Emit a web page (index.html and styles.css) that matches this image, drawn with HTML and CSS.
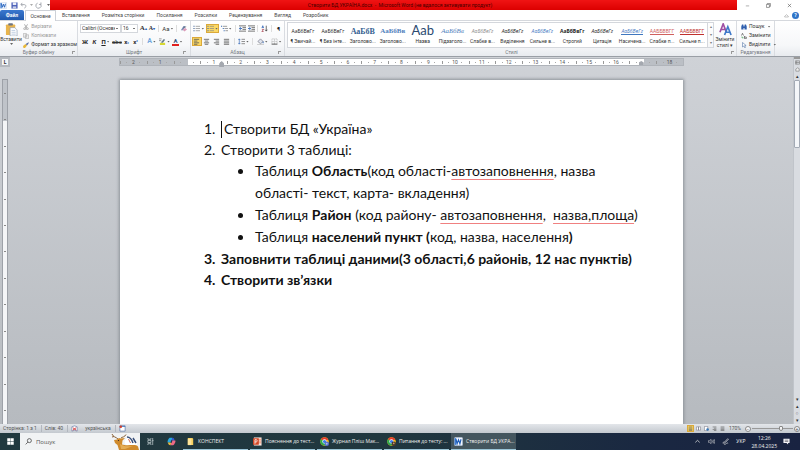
FILE: index.html
```html
<!DOCTYPE html>
<html lang="uk">
<head>
<meta charset="utf-8">
<title>Створити БД УКРАЇНА.docx</title>
<link rel="stylesheet" href="styles.css">
</head>
<body>
<svg class="defs" aria-hidden="true">
  <symbol id="word" viewBox="0 0 16 16"><rect x="4" y="1" width="11" height="14" rx="1" fill="#41a5ee"/><path d="M4 8h11v6a1 1 0 0 1-1 1H5a1 1 0 0 1-1-1z" fill="#185abd"/><rect x="0" y="3" width="10" height="10" rx="1" fill="#1a56b0"/><path d="M2 5.500l1.500 5L5 6l1.500 4.500L8 5.500" fill="none" stroke="#fff" stroke-width="1.200"/></symbol>
  <symbol id="wordlight" viewBox="0 0 16 16"><rect x="1" y="1" width="14" height="14" rx="1" fill="#f3f7fd" stroke="#b9cbe6"/><path d="M1 2h3v12H1z" fill="#3b7bd0"/><path d="M3.500 4l2 8L8 5l2.500 7 2-8" fill="none" stroke="#1d5cb8" stroke-width="2"/></symbol>
  <symbol id="chrome" viewBox="0 0 20 20"><circle cx="10" cy="10" r="9.500" fill="#fbc116"/><path d="M10 10L1.800 5.200A9.500 9.500 0 0 1 18.300 5.500z" fill="#e33b2e"/><path d="M10 10L1.800 5.200A9.500 9.500 0 0 0 9.500 19.500L14 12z" fill="#2da94f"/><circle cx="10" cy="10" r="4.800" fill="#fff"/><circle cx="10" cy="10" r="3.600" fill="#3b7de9"/></symbol>
  <symbol id="left" viewBox="0 0 8 8"><path d="M1 1.500h6M1 3.500h4M1 5.500h6M1 7.200h4" stroke="#555" stroke-width=".9"/></symbol>
  <symbol id="center" viewBox="0 0 8 8"><path d="M1 1.500h6M2 3.500h4M1 5.500h6M2 7.200h4" stroke="#555" stroke-width=".9"/></symbol>
  <symbol id="right" viewBox="0 0 8 8"><path d="M1 1.500h6M3 3.500h4M1 5.500h6M3 7.200h4" stroke="#555" stroke-width=".9"/></symbol>
  <symbol id="full" viewBox="0 0 8 8"><path d="M1 1.500h6M1 3.500h6M1 5.500h6M1 7.200h6" stroke="#555" stroke-width=".9"/></symbol>
  <symbol id="list" viewBox="0 0 8 8"><path d="M3 1.500h5M3 4h5M3 6.500h5" stroke="#888" stroke-width=".8"/><path d="M.5 1.500h1.300M.5 4h1.300M.5 6.500h1.300" stroke="#46689c" stroke-width="1.200"/></symbol>
  <symbol id="multi" viewBox="0 0 8 8"><path d="M2 1.500h5M4 4h4M5 6.500h3" stroke="#777" stroke-width=".8"/><path d="M0 1.500h1.200M2 4h1.200M3 6.500h1.200" stroke="#3569b5" stroke-width="1.200"/></symbol>
  <symbol id="outdent" viewBox="0 0 8 8"><path d="M0 1h8M4 3h4M4 5h4M0 7h8" stroke="#555" stroke-width=".9"/><path d="M3.500 4H1M2 2.500L.3 4 2 5.500" stroke="#2d62b5" fill="none"/></symbol>
  <symbol id="indent" viewBox="0 0 8 8"><path d="M0 1h8M4 3h4M4 5h4M0 7h8" stroke="#555" stroke-width=".9"/><path d="M0 4h2.500M1.500 2.500L3.200 4 1.500 5.500" stroke="#2d62b5" fill="none"/></symbol>
</svg>

<header class="titlebar">
  <div class="quick">
    <svg class="i7"><use href="#wordlight"/></svg>
    <i class="vline"></i>
    <button aria-label="Зберегти"><svg class="i7" viewBox="0 0 8 8"><path d="M.5.5h7v7h-7z" fill="#4a5fb8"/><path d="M2 .5h4v3H2z" fill="#e8ecf8"/><path d="M2 5h4v2.500H2z" fill="#c9d0e8"/></svg></button>
    <button aria-label="Скасувати"><svg class="i7" viewBox="0 0 8 8"><path d="M2.500 1L1 3l2 1.500M1.200 3H5c2.500 0 2 3.500 0 4" fill="none" stroke="#9ba0a8"/></svg></button>
    <span class="caret-down pale"></span>
    <button aria-label="Повторити"><svg class="i7" viewBox="0 0 8 8"><path d="M6.500 2.500A3 3 0 1 1 3 1.300M6.800.5v2.300H4.500" fill="none" stroke="#9ba0a8"/></svg></button>
    <i class="vline"></i>
    <span class="caret-down"></span>
  </div>
  <h1 class="caption">Створити БД УКРАЇНА.docx&nbsp; -&nbsp; Microsoft Word (не вдалося активувати продукт)</h1>
  <div class="winbtns">
    <button aria-label="Згорнути"><svg class="i5" viewBox="0 0 6 6"><path d="M1 3.500h4" stroke="#777" stroke-width=".7"/></svg></button>
    <button aria-label="Відновити"><svg class="i5" viewBox="0 0 6 6"><path d="M.5 1.700h3.600v3.600H.5zM1.700 1.500V.5h3.600v3.600H4.300" fill="none" stroke="#555" stroke-width=".7"/></svg></button>
    <button aria-label="Закрити"><svg class="i5" viewBox="0 0 6 6"><path d="M1 1l4 4M5 1L1 5" stroke="#555" stroke-width=".7"/></svg></button>
  </div>
</header>

<nav class="tabs">
  <button class="file">Файл</button>
  <button class="current">Основне</button>
  <button>Вставлення</button>
  <button>Розмітка сторінки</button>
  <button>Посилання</button>
  <button>Розсилки</button>
  <button>Рецензування</button>
  <button>Вигляд</button>
  <button>Розробник</button>
  <span class="help">
    <svg class="i5" viewBox="0 0 6 6"><path d="M.8 4L3 2l2.200 2v.8H.8z" fill="none" stroke="#888" stroke-width=".6"/></svg>
    <button class="helpbtn" aria-label="Довідка">?</button>
  </span>
</nav>

<section class="ribbon">
  <div class="group clipboard">
    <div class="tools split">
      <button class="big"><svg class="i14" viewBox="0 0 14 14"><rect x="1" y="1.500" width="10" height="11.500" rx="1" fill="#e9b44c"/><rect x="3.500" y=".3" width="5" height="2.500" rx=".8" fill="#6f7480"/><path d="M5.500 5h5l2.500 2.500V14H5.500z" fill="#fff" stroke="#8d9db8" stroke-width=".7"/><path d="M7 8h4M7 10h4.500M7 12h4.500" stroke="#8fa8cf" stroke-width=".6"/></svg><span>Вставити</span><i class="caret-down"></i></button>
      <div class="stack">
        <button class="off"><svg class="i6" viewBox="0 0 6 6"><path d="M1.500.3l2 3.500M4.500.3l-2 3.500" stroke="#999" stroke-width=".8"/><circle cx="1.700" cy="4.700" r="1" fill="none" stroke="#999" stroke-width=".7"/><circle cx="4.300" cy="4.700" r="1" fill="none" stroke="#999" stroke-width=".7"/></svg>Вирізати</button>
        <button class="off"><svg class="i6" viewBox="0 0 6 6"><path d="M.4.4h3v3.800h-3zM2.400 1.800h3.200v3.800H2.400z" fill="#eee" stroke="#aaa" stroke-width=".6"/></svg>Копіювати</button>
        <button><svg class="i6" viewBox="0 0 6 6"><path d="M0 4l2.500-2 1.500 1.500L2 6H.5z" fill="#e8b83a"/><path d="M2.700 2L5.500.2 5.800 1 4 3.500z" fill="#5a6ea5"/></svg>Формат за зразком</button>
      </div>
    </div>
    <footer>Буфер обміну<i class="launch"></i></footer>
  </div>

  <div class="group font">
    <div class="tools">
      <div class="row">
        <select class="fontname" aria-label="Шрифт"><option>Calibri (Основний текст)</option></select>
        <select class="fontsize" aria-label="Розмір"><option>16</option></select>
        <button class="w9 serif">A<sup class="blue">▴</sup></button>
        <button class="w9 serif small">A<sup class="blue">▾</sup></button>
        <i class="sep"></i>
        <button class="w13">Aa<i class="caret-down"></i></button>
        <i class="sep"></i>
        <button class="w9" aria-label="Очистити формат"><svg class="i7" viewBox="0 0 8 8"><path d="M1 6l3-5h2L4 6z" fill="#7a8db5"/><path d="M3 5l3-1.500L8 5 5 7.500z" fill="#dc9bb8"/><path d="M4 3l3-1" stroke="#456" stroke-width=".8"/></svg></button>
      </div>
      <div class="row">
        <button class="w10 heavy">Ж</button>
        <button class="w9 heavy ital">К</button>
        <button class="w13 heavy"><u>П</u><i class="caret-down"></i></button>
        <button class="w10"><s>abc</s></button>
        <button class="w9 heavy">x<sub class="blue">₂</sub></button>
        <button class="w9 heavy">x<sup class="blue">²</sup></button>
        <i class="sep"></i>
        <button class="w13 effect">A<i class="caret-down"></i></button>
        <button class="w13" aria-label="Колір виділення"><svg class="i7" viewBox="0 0 8 8"><path d="M1 5.500h6V8H1z" fill="#d7d832"/><path d="M2 5l3.500-4L7 2 4.500 5.500z" fill="#687d8d"/><path d="M0 1h3M0 3h2.500" stroke="#777" stroke-width=".8"/></svg><i class="caret-down"></i></button>
        <button class="w13"><span class="fontcolor">A</span><i class="caret-down"></i></button>
      </div>
    </div>
    <footer>Шрифт<i class="launch"></i></footer>
  </div>

  <div class="group para">
    <div class="tools">
      <div class="row">
        <button class="w13" aria-label="Маркери"><svg class="i7"><use href="#list"/></svg><i class="caret-down"></i></button>
        <button class="w13 on" aria-label="Нумерація"><svg class="i7"><use href="#list"/></svg><i class="caret-down"></i></button>
        <button class="w13" aria-label="Багаторівневий список"><svg class="i7"><use href="#multi"/></svg><i class="caret-down"></i></button>
        <i class="sep"></i>
        <button class="w9" aria-label="Зменшити відступ"><svg class="i7"><use href="#outdent"/></svg></button>
        <button class="w9" aria-label="Збільшити відступ"><svg class="i7"><use href="#indent"/></svg></button>
        <i class="sep"></i>
        <button class="w9" aria-label="Сортування"><svg class="i7" viewBox="0 0 8 8"><path d="M1 3.500L2 .8l1 2.700M1.200 2.600h1.600" fill="none" stroke="#2d62b5" stroke-width=".8"/><path d="M1 5h2L1 7.500h2" fill="none" stroke="#a03040" stroke-width=".8"/><path d="M6 .8v6M4.800 5.400L6 7l1.200-1.600" fill="none" stroke="#333" stroke-width=".8"/></svg></button>
        <i class="sep"></i>
        <button class="w9 heavy">¶</button>
      </div>
      <div class="row">
        <button class="w10 on" aria-label="Ліворуч"><svg class="i7"><use href="#left"/></svg></button>
        <button class="w10" aria-label="По центру"><svg class="i7"><use href="#center"/></svg></button>
        <button class="w10" aria-label="Праворуч"><svg class="i7"><use href="#right"/></svg></button>
        <button class="w10" aria-label="По ширині"><svg class="i7"><use href="#full"/></svg></button>
        <i class="sep"></i>
        <button class="w13" aria-label="Інтервал"><svg class="i7" viewBox="0 0 8 8"><path d="M4 1.500h4M4 4h4M4 6.500h4" stroke="#666" stroke-width=".8"/><path d="M1.500 1v6M.3 2.400L1.500 1l1.200 1.400M.3 5.600L1.500 7l1.200-1.400" fill="none" stroke="#2d62b5" stroke-width=".7"/></svg><i class="caret-down"></i></button>
        <i class="sep"></i>
        <button class="w13" aria-label="Заливка"><svg class="i7" viewBox="0 0 8 8"><path d="M1 4l3-3 3 3-3 2.500z" fill="#dfe4ee" stroke="#667" stroke-width=".7"/><path d="M7 4v2" stroke="#2d62b5"/><path d="M0 7.500h8" stroke="#bbb" stroke-width=".8"/></svg><i class="caret-down"></i></button>
        <button class="w13" aria-label="Межі"><svg class="i7" viewBox="0 0 8 8"><path d="M1 1h6v6H1zM4 1v6M1 4h6" fill="none" stroke="#999" stroke-width=".6" stroke-dasharray="1 .6"/><path d="M.7 7h6.600" stroke="#444" stroke-width=".9"/></svg><i class="caret-down"></i></button>
      </div>
    </div>
    <footer>Абзац<i class="launch"></i></footer>
  </div>

  <div class="group styles">
    <div class="tools split">
      <div class="gallery">
        <button><b>АаБбВвГг</b><span>¶ Звичай...</span></button>
        <button><b>АаБбВвГг</b><span>¶ Без інте...</span></button>
        <button><b class="h1">АаБбВ</b><span>Заголово...</span></button>
        <button><b class="h2">АаБбВв</b><span>Заголово...</span></button>
        <button><b class="title">Ааb</b><span>Назва</span></button>
        <button><b class="subtitle">АаБбВв</b><span>Підзаголо...</span></button>
        <button><b class="ital faded">АаБбВвГг</b><span>Слабке в...</span></button>
        <button><b class="ital">АаБбВвГг</b><span>Виділення</span></button>
        <button><b class="ital azure">АаБбВвГг</b><span>Сильне в...</span></button>
        <button><b class="heavy">АаБбВвГг</b><span>Строгий</span></button>
        <button><b class="ital">АаБбВвГг</b><span>Цитація</span></button>
        <button><b class="ital azure lined">АаБбВвГг</b><span>Насичена...</span></button>
        <button><b class="rose lined">ААББВВГГ</b><span>Слабке п...</span></button>
        <button><b class="crimson lined">ААББВВГГ</b><span>Сильне п...</span></button>
      </div>
      <div class="scroller"><button aria-label="Вгору">▴</button><button aria-label="Вниз">▾</button><button aria-label="Більше">▾</button></div>
      <button class="big change"><svg class="i14" viewBox="0 0 14 14"><path d="M1 10L4.500 1 8 10M2.200 7h4.600" fill="none" stroke="#9f4fa3" stroke-width="1.800"/><path d="M6 13L9.500 4 13 13M7.200 10h4.600" fill="none" stroke="#3f79c9" stroke-width="1.800"/></svg><span>Змінити</span><span>стилі ▾</span></button>
    </div>
    <footer>Стилі<i class="launch"></i></footer>
  </div>

  <div class="group edit">
    <div class="tools stack">
      <button><svg class="i6" viewBox="0 0 6 6"><path d="M.3 5.500v-3L1 .5h1.300l.4 2h.6l.4-2H5l.7 2v3H3.500V4h-1v1.500z" fill="#2f5fae"/></svg>Пошук<i class="caret-down"></i></button>
      <button><svg class="i6" viewBox="0 0 6 6"><path d="M.5 2.500L1.500.3l1 2.200M3.500 3v2.700h1.800V4H3.500" fill="none" stroke="#555" stroke-width=".7"/><path d="M1 3.500v1.300h1.500" fill="none" stroke="#3a9a4c" stroke-width=".7"/></svg>Замінити</button>
      <button><svg class="i6" viewBox="0 0 6 6"><path d="M1.500.5v4.500l1.200-1 1 1.800.8-.4-.9-1.700 1.500-.2z" fill="#fff" stroke="#5577a8" stroke-width=".6"/></svg>Виділити<i class="caret-down"></i></button>
    </div>
    <footer>Редагування</footer>
  </div>
</section>

<main class="workspace">
  <aside class="leftrail">
    <button class="tabstop" aria-label="Табуляція">L</button>
    <div class="vruler"><i></i><i></i><i></i><i></i><i></i><i></i><i></i><i></i><i></i><i></i><i></i><i></i><i></i></div>
  </aside>
  <div class="canvas">
    <div class="ruler">
      <span>2</span><span>1</span><span class="zero"></span><span class="hang">1</span><span>2</span><span>3</span><span>4</span><span>5</span><span>6</span><span>7</span><span>8</span><span>9</span><span>10</span><span>11</span><span>12</span><span>13</span><span>14</span><span>15</span><span>16</span><span class="hang end"></span><span>18</span>
    </div>
    <article class="page">
      <ol>
        <li><span class="num">1.</span><p><i class="cursor"></i>Створити БД «Україна»</p></li>
        <li><span class="num">2.</span><p>Створити 3 таблиці:</p></li>
      </ol>
      <ul>
        <li><i class="dot"></i><p>Таблиця <b>Область</b>(код області-<u>автозаповнення</u>, назва<br>області- текст, карта- вкладення)</p></li>
        <li><i class="dot"></i><p>Таблиця <b>Район</b> (код району- <u>автозаповнення</u>,&nbsp; <u>назва,площа</u>)</p></li>
        <li><i class="dot"></i><p>Таблиця <b>населений пункт (</b>код, назва, населення<b>)</b></p></li>
      </ul>
      <ol class="strong">
        <li><span class="num">3.</span><p>Заповнити таблиці даними(3 області,6 районів, 12 нас пунктів)</p></li>
        <li><span class="num">4.</span><p>Створити зв’язки</p></li>
      </ol>
    </article>
  </div>
  <aside class="scrollbar">
    <button class="tiny" aria-label="Розділити"></button>
    <button aria-label="Лінійка"><svg class="i5" viewBox="0 0 6 6"><path d="M.5 1h5v4h-5zM.5 3h5M2 1v4" fill="none" stroke="#777" stroke-width=".7"/></svg></button>
    <button aria-label="Рука"><svg class="i5" viewBox="0 0 6 6"><path d="M1 2.500V5h4V2L3 1z" fill="#eee" stroke="#777" stroke-width=".7"/></svg></button>
    <button>▴</button>
    <div class="thumb"></div>
    <span class="track"></span>
    <button>▾</button>
    <button>▴</button>
    <button>○</button>
    <button>▾</button>
  </aside>
</main>

<section class="status">
  <span>Сторінка: 1 з 1</span>
  <span>Слів: 40</span>
  <span class="bare"><svg class="i7" viewBox="0 0 8 8"><path d="M1 2l3-1 3 1v5L4 6 1 7z" fill="#fff" stroke="#5d77a8" stroke-width=".7"/><path d="M2 3l4 3M6 3L2 6" stroke="#d03030"/></svg></span>
  <span>українська</span>
  <span class="bare"><svg class="i7" viewBox="0 0 8 8"><path d="M1 1h6v6H1z" fill="#fff" stroke="#5d77a8" stroke-width=".8"/><path d="M1 1.500h6" stroke="#3569b5"/><circle cx="2" cy="2" r="1.500" fill="#d04030"/></svg></span>
  <div class="views">
    <button class="on" aria-label="Розмітка"><svg class="i5"><use href="#full"/></svg></button>
    <button aria-label="Читання"><svg class="i5" viewBox="0 0 6 6"><path d="M.5 1H3v4H.5zM3 1h2.500v4H3z" fill="#fff" stroke="#667" stroke-width=".6"/></svg></button>
    <button aria-label="Веб"><svg class="i5" viewBox="0 0 6 6"><path d="M.5.5h4v5h-4z" fill="#fff" stroke="#667" stroke-width=".6"/><circle cx="4.300" cy="4.300" r="1.500" fill="#3878b8"/></svg></button>
    <button aria-label="Структура"><svg class="i5"><use href="#right"/></svg></button>
    <button aria-label="Чернетка"><svg class="i5"><use href="#full"/></svg></button>
  </div>
  <span class="bare percent">170%</span>
  <div class="zoom"><button aria-label="Зменшити">−</button><input type="range" min="0" max="100" value="72" aria-label="Масштаб"><button aria-label="Збільшити">+</button></div>
</section>

<footer class="taskbar">
  <button class="start" aria-label="Пуск"><svg class="i7" viewBox="0 0 8 8"><path d="M.3.3h3.500v3.500H.3zM4.200.3h3.500v3.500H4.200zM.3 4.200h3.500v3.500H.3zM4.200 4.200h3.500v3.500H4.200z" fill="#fff"/></svg></button>
  <label class="search">
    <svg class="i7" viewBox="0 0 8 8"><circle cx="5" cy="3" r="2.300" fill="none" stroke="#333" stroke-width=".8"/><path d="M3.300 4.700L.8 7.300" stroke="#333" stroke-width=".8"/></svg>
    <input type="text" placeholder="Пошук" aria-label="Пошук">
    <svg class="deer" viewBox="0 0 30 16"><path d="M8 5C6 3 3 3 2 0M4 2.500L2 3M11 4c1-1 4-1 5-3.500" fill="none" stroke="#8a6238" stroke-width="1"/><path d="M15 10c-1-5 3-8 8-6 3 1 4 3 4 8h-9z" fill="#fff"/><path d="M17 3c3 0 5 3 6 6M23 4l3 5" fill="none" stroke="#394f78" stroke-width="1.500"/><path d="M18.500 5l2 4" stroke="#cc6d5a" stroke-width="1"/><path d="M4 6l3-.5 2-1.500 2 .5 4-.5-2.500 2.500-.5 4c5 2 14-1 16 2l1 3.500H9L7.500 11 5 9z" fill="#cf8a2c"/><path d="M10 10l2 1c3 2 8 1 11 1l-8 3h-4z" fill="#e5ad55"/><circle cx="8.500" cy="6.500" r=".6" fill="#322"/></svg>
  </label>
  <button class="pin" aria-label="Подання завдань"><svg class="i7" viewBox="0 0 8 8"><path d="M1 0v1.500h3.500V0M1 8V6.500h3.500V8M1 2.800h3.500v2.400H1zM6.500 0v8M6 3h1.500" fill="none" stroke="#dde6e8" stroke-width=".7"/></svg></button>
  <button class="pin" aria-label="Copilot"><svg class="i9" viewBox="0 0 10 10"><path d="M3 .8h3L4.500 6H.8C0 5 2 1 3 .8z" fill="#28a8e0"/><path d="M6 .8c2 0 2 2 2.500 3L5 4.500z" fill="#3659d8"/><path d="M5.500 4h3.700c.8 1-1 5-2.500 5.200h-3z" fill="#ec6a86"/><path d="M.8 6h4l-1 3.200C2 9.200 1.500 7.500.8 6z" fill="#e9b93c"/><path d="M4.500 3.700h1.600L5.300 6.300H3.800z" fill="#223a4a"/></svg></button>
  <button class="task"><svg class="i9" viewBox="0 0 10 10"><path d="M2 1h5l1 1v7H2z" fill="#f6cf5c"/><path d="M2 2h4v7H2z" fill="#fde49a"/></svg>КОНСПЕКТ</button>
  <button class="task"><svg class="i9" viewBox="0 0 10 10"><path d="M1 .5h8.500v9H1z" fill="#fbe9e2"/><path d="M6 2.500h3M6 4.500h3M6 6.500h3" stroke="#ed6c47" stroke-width=".8"/><rect x="0" y="1.500" width="6.500" height="7" rx=".4" fill="#d24726"/><path d="M2.200 7.500V3h1.500a1.300 1.300 0 0 1 0 2.500H2.200" fill="none" stroke="#fff" stroke-width=".9"/></svg>Пояснення до тест...</button>
  <button class="task"><svg class="i9" viewBox="0 0 20 20"><use href="#chrome"/><circle cx="15" cy="15" r="5" fill="#5472c9"/><circle cx="15" cy="15" r="2" fill="#a9b9ee"/></svg>Журнал Пліш Мак...</button>
  <button class="task"><svg class="i9" viewBox="0 0 20 20"><use href="#chrome"/><circle cx="15" cy="15" r="5" fill="#4b392b"/><circle cx="15" cy="14" r="2" fill="#c39a76"/></svg>Питання до тесту: ...</button>
  <button class="task active"><svg class="i9"><use href="#wordlight"/></svg>Створити БД УКРА...</button>
  <div class="tray">
    <svg class="i7" viewBox="0 0 8 8"><path d="M1.500 5L4 2.700 6.500 5" fill="none" stroke="#eee" stroke-width=".8"/></svg>
    <svg class="i7" viewBox="0 0 8 8"><path d="M.5 3h1.300L3.500 1.500v5L1.800 5H.5zM4.700 2.800q.8 1.200 0 2.400M5.800 2q1.400 2 0 4M7 1.300q1.800 2.700 0 5.400" fill="none" stroke="#ddd" stroke-width=".6"/></svg>
    <svg class="i7" viewBox="0 0 8 8"><path d="M3 4.500L6.500.8l.8.700L4 5zM.5 6c1-2 3-1 2 0s0 1.500 1.500 1 1-2 3-1" fill="none" stroke="#ddd" stroke-width=".8"/></svg>
    <span>УКР</span>
    <time>12:26<br>28.04.2025</time>
    <svg class="i7" viewBox="0 0 8 8"><path d="M.5.800h7v5H5.800v1.700L4 5.800H.5z" fill="#f4f4f8"/><path d="M2 2.500h4M2 4h4" stroke="#334" stroke-width=".6"/></svg>
  </div>
</footer>
</body>
</html>
```
FILE: styles.css
```css
* { box-sizing: border-box; }

body {
  margin: 0;
  min-height: 100vh;
  display: flex;
  flex-direction: column;
  font: 5px/7px Roboto, "Noto Sans", sans-serif;
  color: #333;
  background: #c6cacf;
}

button, input, select {
  font: inherit;
  color: inherit;
  border: 0;
  padding: 0;
  margin: 0;
  background: none;
}

button {
  display: flex;
  align-items: center;
  justify-content: center;
  white-space: nowrap;
}

svg { display: block; flex: none; }
.defs { width: 0; height: 0; position: absolute; }
.i5 { width: 5px; height: 5px; }
.i6 { width: 6px; height: 6px; }
.i7 { width: 7px; height: 7px; }
.i9 { width: 9px; height: 9px; }
.i14 { width: 13px; height: 13px; }

.caret-down {
  flex: none;
  width: 3px;
  height: 2px;
  background: #666;
  clip-path: polygon(0 0, 100% 0, 50% 100%);
  margin-left: 1px;
}
.pale { background: #aaa; }

/* Title bar */
.titlebar { display: flex; height: 10px; background: #fff; }
.quick { width: 50px; display: flex; align-items: center; gap: 2px; }
.vline { width: 1px; height: 6px; background: #bbb; }
.caption {
  flex: 1;
  margin: 0;
  background: linear-gradient(#f01414, #dc0000);
  color: #4a0000;
  font-size: 5px;
  font-weight: 400;
  line-height: 10px;
  text-align: center;
  padding-left: 13px;
}
.winbtns { width: 63px; display: flex; }
.winbtns button { flex: 1; }

/* Tabs */
.tabs { display: flex; height: 11px; background: #fff; border-bottom: 1px solid #d5d8dd; }
.tabs > button { padding: 0 6px; color: #444; }
.tabs .file {
  width: 24px;
  padding: 0;
  color: #fff;
  font-weight: 600;
  background: linear-gradient(#3a78cf, #1f58ad);
  border-radius: 2px 2px 0 0;
  margin-right: 1px;
}
.tabs .current {
  width: 31px;
  height: 11px;
  padding: 0;
  background: #fff;
  border: 1px solid #cdd1d7;
  border-bottom: 0;
  border-radius: 1px 1px 0 0;
}
.help { margin-left: auto; display: flex; align-items: center; gap: 3px; padding-right: 1px; }
.helpbtn { width: 7px; height: 7px; border-radius: 50%; background: #2f74c8; color: #fff; font-weight: 700; }

/* Ribbon */
.ribbon {
  display: flex;
  height: 36px;
  background: linear-gradient(#fff, #f6f7f9 70%, #e8ebef);
  border-bottom: 1px solid #9a9fa6;
}
.group { display: flex; flex-direction: column; border-right: 1px solid #d9dce1; }
.tools { flex: 1; padding-top: 1px; }
.group footer { height: 7px; line-height: 6px; text-align: center; color: #73777e; position: relative; }
.launch { position: absolute; right: 2px; top: 2px; width: 3px; height: 3px; border: solid #999; border-width: 1px 0 0 1px; }
.clipboard { width: 78px; }
.font { width: 113px; padding: 0 2px; }
.para { width: 94px; padding: 0 1px; }
.styles { flex: 1; padding-left: 2px; }
.edit { width: 38px; margin-right: 25px; }
.split { display: flex; }
.big { width: 24px; flex-direction: column; justify-content: flex-start; padding-top: 1px; line-height: 6px; }
.clipboard .big span { line-height: 7px; }
.stack { display: flex; flex-direction: column; }
.stack button { height: 9px; justify-content: flex-start; gap: 2px; padding-left: 1px; }
.edit .stack button { padding-left: 4px; }
.off { color: #999; }

.row { display: flex; align-items: center; height: 13px; }
.row button { height: 9px; font-size: 6px; }
.row .on, .views .on { background: #fbd865; border: 1px solid #dba93a; }
.fontname, .fontsize {
  appearance: none;
  height: 9px;
  border: 1px solid #d4d7dc;
  padding: 0 1px;
  background: #fff linear-gradient(#777, #777) right 2px center / 2px 1px no-repeat;
}
.fontname { width: 41px; padding-right: 5px; overflow: hidden; }
.fontsize { width: 17px; margin-right: 1px; }
.w9 { width: 9px; }
.w10 { width: 10px; }
.w13 { width: 13px; }
.para .w13 { width: 14px; }
.sep { width: 1px; height: 7px; background: #ddd; margin: 0 2px; }
.serif { font-family: "Liberation Serif", serif; font-weight: 700; }
.row .serif { font-size: 7px; }
.row .small { font-size: 6px; }
.row sup, .row sub { font-size: 4px; line-height: 4px; }
.blue { color: #2d62b5; }
.heavy { font-weight: 700; color: #222; }
.ital { font-style: italic; }
.effect { color: #6fa5dd; font-weight: 700; }
.row .effect { font-size: 7px; }
.fontcolor { font-weight: 700; color: #34527e; line-height: 6px; border-bottom: 2px solid #e02020; padding: 0 1px; }

.gallery {
  flex: 1;
  display: grid;
  grid-template-columns: repeat(14, 1fr);
  height: 26px;
  border: 1px solid #d4d7dc;
  background: #fff;
}
.gallery button { flex-direction: column; justify-content: flex-end; min-width: 0; padding-bottom: 2px; }
.gallery b { font: 5px/11px "Open Sans", sans-serif; color: #222; }
.gallery b.heavy { font-weight: 700; }
.gallery b.ital { font-style: italic; }
.gallery span { line-height: 8px; }
.gallery .h1 { font: 700 8px/11px "Liberation Serif", serif; color: #365f91; }
.gallery .h2 { font: 700 7px/11px "Liberation Serif", serif; color: #4f81bd; }
.gallery .title { font: 13px/13px Lato, sans-serif; color: #2b4a70; }
.gallery .subtitle { font: italic 7px/11px "Liberation Serif", serif; color: #4f81bd; }
.gallery .faded { color: #8a8a8a; }
.gallery .azure { color: #3f77bf; }
.gallery .rose { color: #d0605e; }
.gallery .crimson { color: #c0302e; }
.gallery .lined { line-height: 6px; border-bottom: 1px solid; margin-bottom: 2px; }
.gallery .rose, .gallery .crimson { font-family: Roboto, sans-serif; }
.scroller { width: 6px; height: 26px; display: flex; flex-direction: column; border: 1px solid #d4d7dc; border-left: 0; }
.scroller button { flex: 1; color: #777; font-size: 4px; line-height: 4px; }
.change { width: 22px; }

/* Document area */
.workspace { flex: 1; display: flex; background: linear-gradient(#cfd2d7, #b6babf); }
.leftrail { width: 10px; display: flex; flex-direction: column; }
.tabstop { width: 10px; height: 10px; border: 2px solid #b5b9bf; background: #f4f5f7; font-weight: 700; }
.vruler {
  flex: 1;
  width: 6px;
  margin: 12px 0 0 2px;
  border: 1px solid #9da1a8;
  border-bottom: 0;
  background: linear-gradient(#bfc3c9 41px, #f4f5f7 41px);
  display: flex;
  flex-direction: column;
  justify-content: space-around;
  align-items: center;
}
.vruler i { width: 2px; height: 1px; background: #888; }
.canvas { flex: 1; display: flex; flex-direction: column; padding: 2px 110px 0; }
.ruler {
  display: grid;
  grid-template-columns: repeat(21, 1fr);
  height: 6px;
  outline: 1px solid #b0b4ba;
  background: linear-gradient(90deg, #bbbfc5 12%, #fff 12%, #fff 93%, #bbbfc5 93%);
}
.ruler span {
  position: relative;
  font-size: 5px;
  line-height: 6px;
  text-align: center;
  color: #555;
  background:
    linear-gradient(#999, #999) 0 50% / 1px 3px no-repeat,
    linear-gradient(#aaa, #aaa) 25% 50% / 1px 1px no-repeat,
    linear-gradient(#aaa, #aaa) 75% 50% / 1px 1px no-repeat;
}
.hang::after {
  content: "";
  position: absolute;
  left: 70%;
  top: 2px;
  width: 5px;
  height: 6px;
  background: #a4a8af;
  clip-path: polygon(50% 0, 100% 40%, 100% 100%, 0 100%, 0 40%);
}
.end::after { left: 35%; height: 4px; }
.page {
  flex: 1;
  margin-top: 15px;
  padding: 38px 40px 0 84px;
  background: #fff;
  box-shadow: 0 0 3px 1px #8b9097;
  color: #111;
  font: 14px/21px Lato, "Open Sans", sans-serif;
}
.page ol, .page ul { margin: 0; padding: 0; list-style: none; }
.page li { display: flex; }
.page p { margin: 0; white-space: nowrap; }
.page ul { line-height: 22px; padding-left: 34px; }
.num { width: 17px; }
.dot { width: 5px; height: 5px; border-radius: 50%; background: #111; margin: 9px 12px 0 0; }
.strong { font-weight: 700; }
.page b { font-weight: 700; }
.page u { text-decoration: underline solid #f08080 1px; text-underline-offset: 3px; text-decoration-skip-ink: none; }
.cursor { display: inline-block; width: 1px; height: 17px; background: #111; vertical-align: -4px; margin-right: 2px; }

.scrollbar { width: 7px; display: flex; flex-direction: column; background: #d9dce1; border-left: 1px solid #c0c4ca; }
.scrollbar button { height: 7px; font-size: 5px; }
.scrollbar .tiny { height: 2px; background: #999; }
.thumb { height: 68px; background: #f4f6f9; border: 1px solid #a3aab5; border-radius: 1px; }
.track { flex: 1; }

/* Status bar */
.status { height: 9px; display: flex; align-items: center; background: linear-gradient(#e3e6ea, #c4c9cf); color: #555; }
.status > span { padding: 0 4px 0 3px; border-right: 1px solid #b2b7be; }
.status > .bare { border-right: 0; }
.views { margin-left: auto; display: flex; align-items: center; gap: 1px; }
.views button { width: 7px; height: 7px; }
.zoom { display: flex; align-items: center; width: 55px; gap: 1px; }
.zoom button { width: 6px; height: 6px; flex: none; border: 1px solid #888; border-radius: 50%; background: #f6f7f9; line-height: 4px; }
.zoom input { flex: 1; min-width: 0; height: 6px; appearance: none; background: linear-gradient(#999, #999) center / 100% 1px no-repeat; }
.zoom input::-webkit-slider-thumb { appearance: none; width: 4px; height: 5px; background: #f4f4f4; border: 1px solid #888; border-radius: 1px 1px 2px 2px; }

/* Taskbar */
.taskbar {
  height: 17px;
  display: flex;
  background: linear-gradient(90deg, #21393f, #20373f 50%, #1a2841 80%, #192341);
  color: #f0f0f0;
  font-family: "Open Sans", sans-serif;
}
.start { width: 20px; }
.search { width: 120px; display: flex; align-items: center; background: #f1f3f4; color: #444; padding-left: 5px; gap: 4px; }
.search input { flex: 1; min-width: 0; font-size: 6px; height: 15px; outline: 0; }
.search input::placeholder { color: #555; opacity: 1; }
.deer { width: 30px; height: 16px; align-self: flex-end; }
.pin { width: 21px; }
.task {
  width: 65px;
  margin: 0 1px;
  justify-content: flex-start;
  gap: 3px;
  padding-left: 3px;
  border-bottom: 1px solid #9cc6d8;
}
.active { background: #44565f; }
.tray { margin-left: auto; display: flex; align-items: center; gap: 7px; padding-right: 10px; }
.tray time { text-align: center; line-height: 8px; margin: 0 -1px; }
```
